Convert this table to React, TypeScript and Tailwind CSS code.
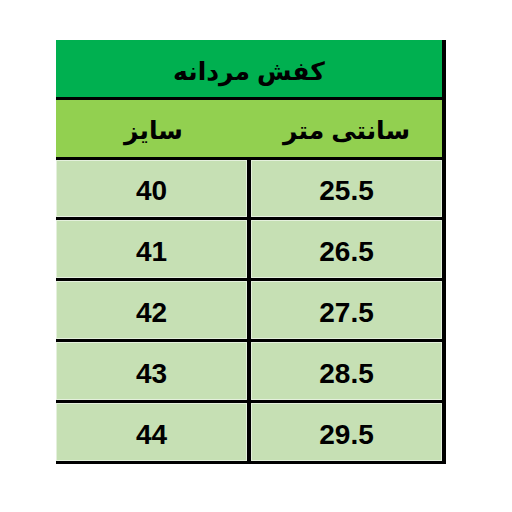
export default function App() {
  const rows = [
    { size: "40", cm: "25.5" },
    { size: "41", cm: "26.5" },
    { size: "42", cm: "27.5" },
    { size: "43", cm: "28.5" },
    { size: "44", cm: "29.5" },
  ];

  return (
    <div className="w-[512px] h-[512px] bg-white pt-[40px] pl-[56px]" style={{ fontFamily: '"Liberation Sans", "DejaVu Sans", sans-serif' }}>
      <div className="w-[390px] border-r-4 border-black text-black font-bold">
        {/* title */}
        <div className="h-[60px] bg-[#00b050] border-b-[3px] border-black flex items-center justify-center">
          <span dir="rtl" className="text-[25px] pt-[6px]">کفش مردانه</span>
        </div>

        {/* column heads */}
        <div className="h-[60px] bg-[#92d050] border-b-[3px] border-black flex">
          <div className="w-[195px] flex items-center justify-center">
            <span dir="rtl" className="text-[25px] pt-[4px]">سایز</span>
          </div>
          <div className="flex-1 flex items-center justify-center">
            <span dir="rtl" className="text-[25px] pt-[4px]">سانتی متر</span>
          </div>
        </div>

        {/* data rows */}
        {rows.map((r, i) => (
          <div key={r.size} className={`${i === 0 ? "h-[60px]" : "h-[61px]"} border-b-[3px] border-black flex bg-[#c6e0b4]`}>
            <div className="w-[195px] border-r-4 border-black flex items-center justify-center shadow-[inset_0_0_0_1px_#e4f0dc]">
              <span className="text-[28px] leading-none pt-[5px]">{r.size}</span>
            </div>
            <div className="flex-1 flex items-center justify-center shadow-[inset_0_0_0_1px_#e4f0dc]">
              <span className="text-[28px] leading-none pt-[5px]">{r.cm}</span>
            </div>
          </div>
        ))}
      </div>
    </div>
  );
}
